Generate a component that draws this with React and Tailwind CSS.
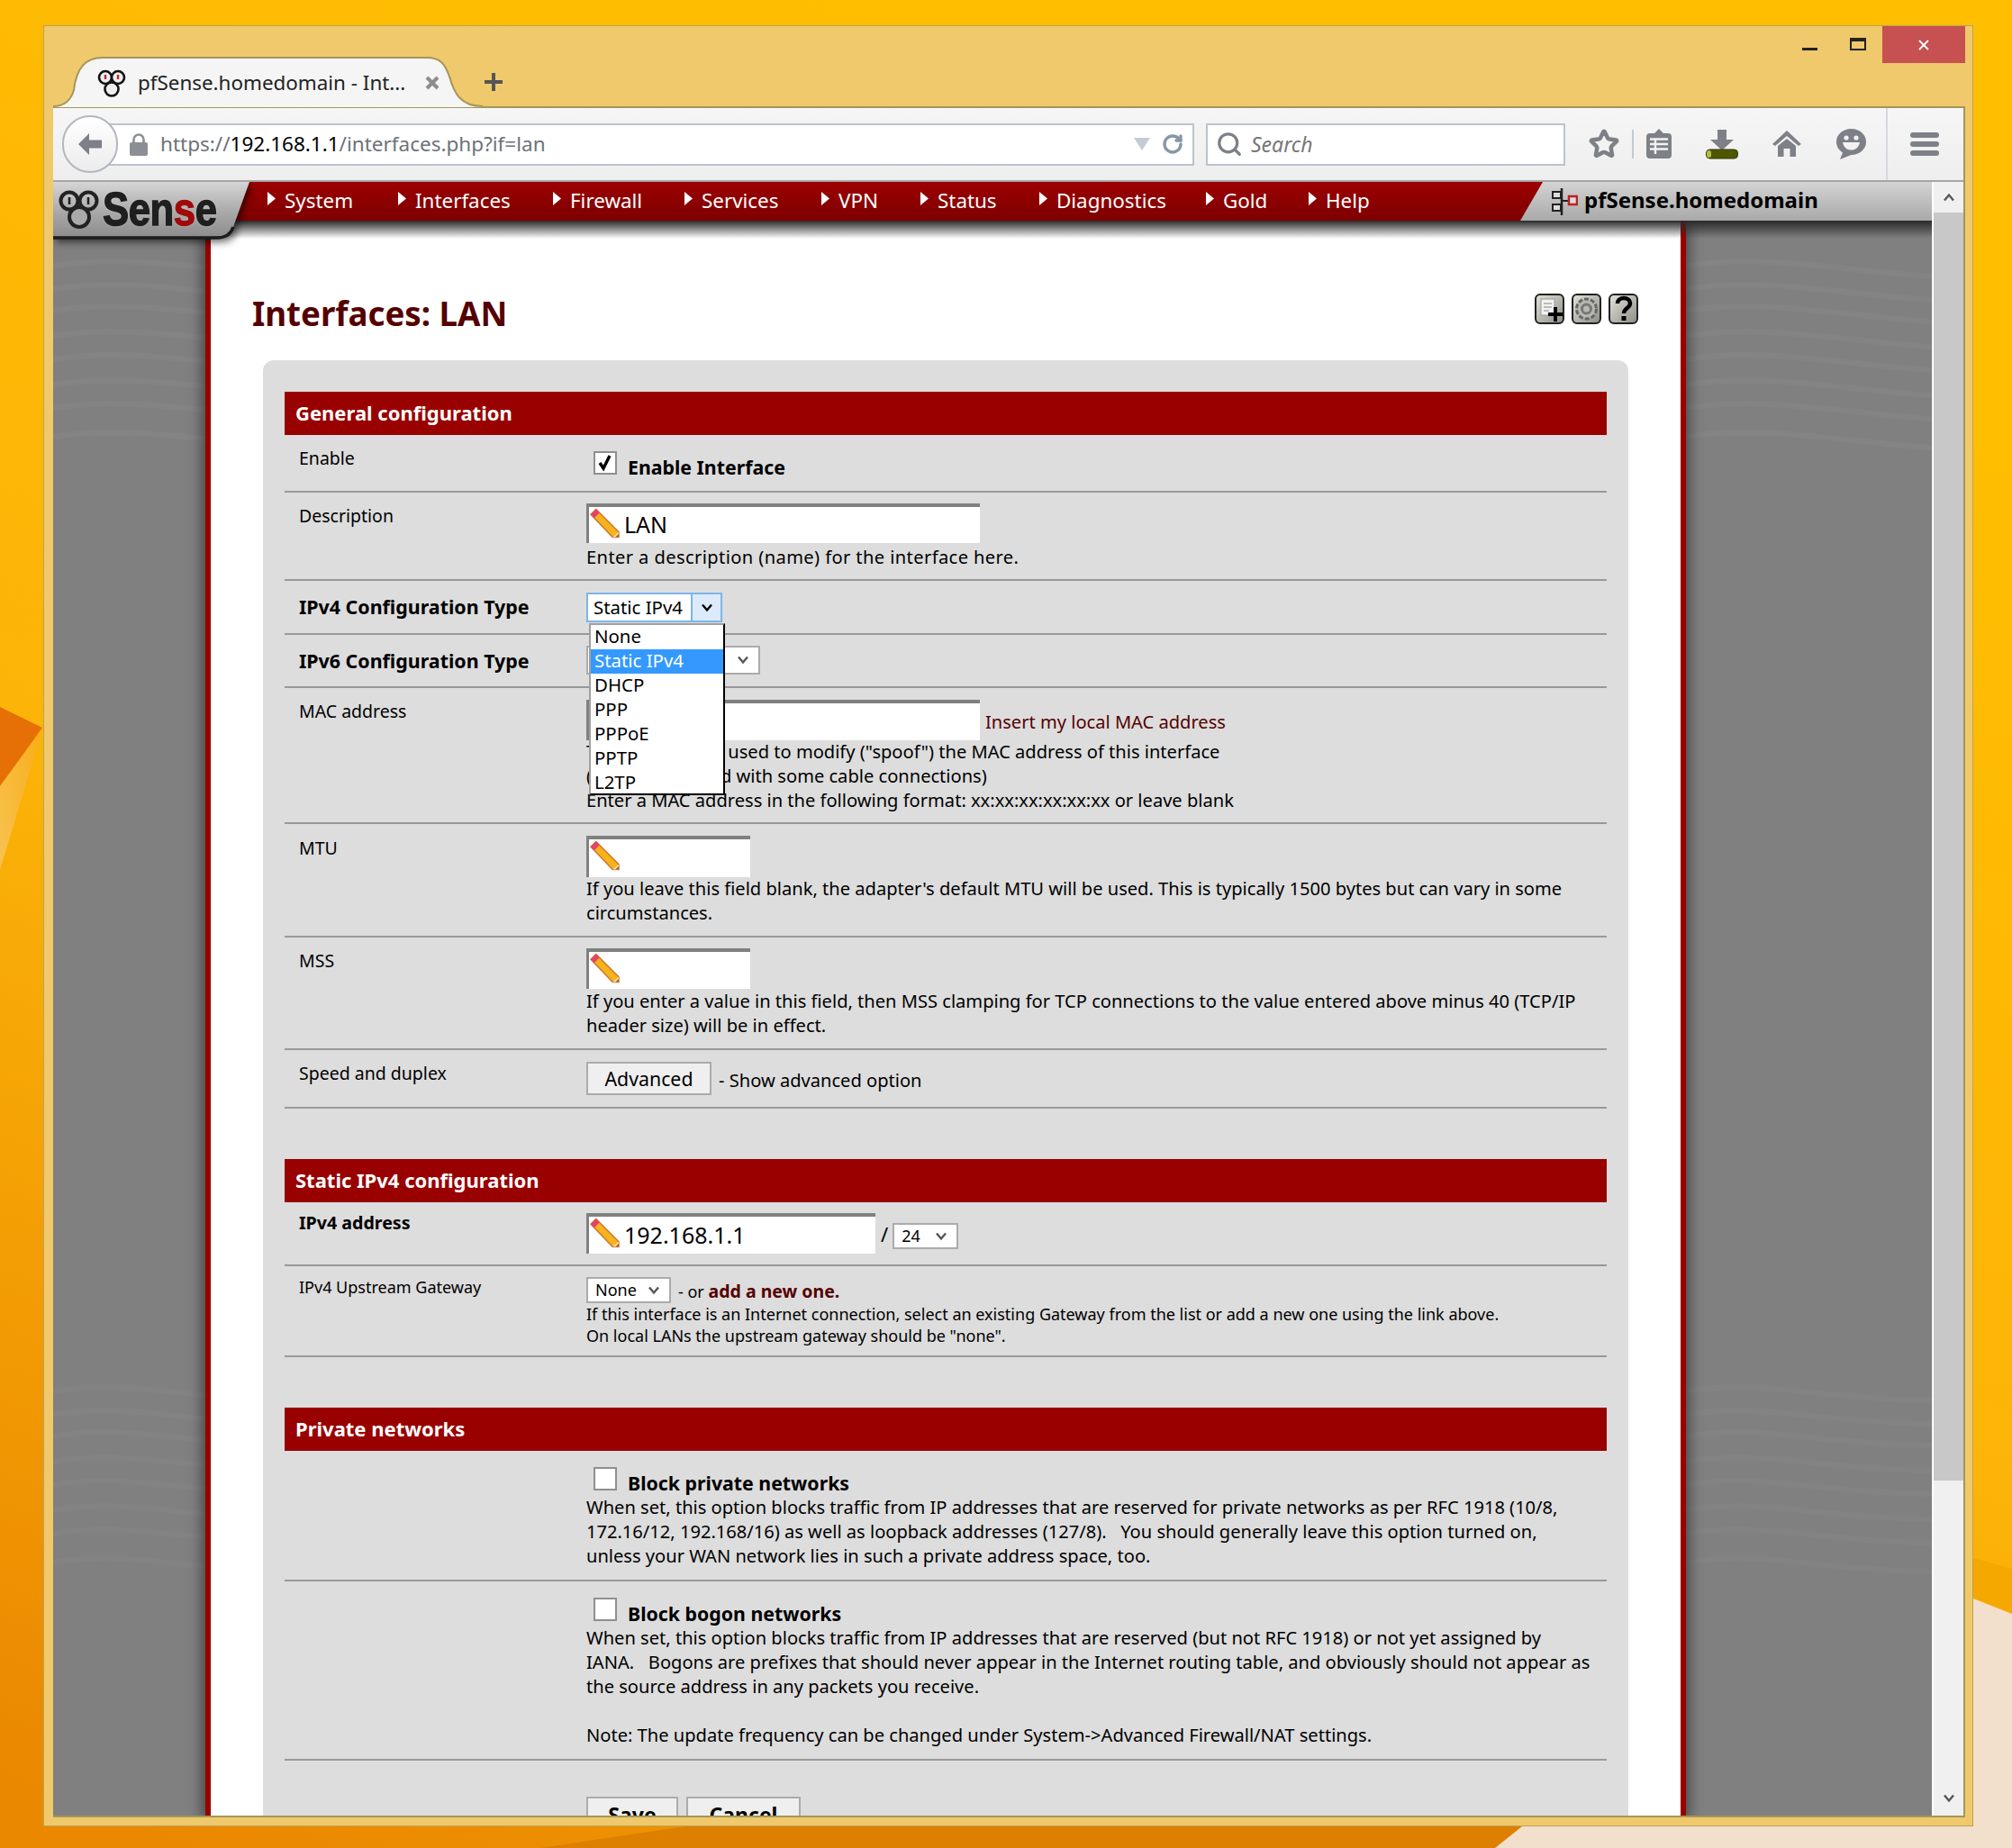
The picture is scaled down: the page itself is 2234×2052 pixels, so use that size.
import React from "react";
import { RotateCw, Search, Star } from "lucide-react";

const NAV = [
  ["System", "w-[145px]"],
  ["Interfaces", "w-[172px]"],
  ["Firewall", "w-[146px]"],
  ["Services", "w-[152px]"],
  ["VPN", "w-[110px]"],
  ["Status", "w-[132px]"],
  ["Diagnostics", "w-[185px]"],
  ["Gold", "w-[114px]"],
  ["Help", "w-[90px]"],
];

function Wallpaper() {
  return (
    <svg className="absolute inset-0" width="2234" height="2052" viewBox="0 0 2234 2052">
      <defs>
        <linearGradient id="wall" gradientUnits="userSpaceOnUse" x1="1000" y1="0" x2="200" y2="2052">
          <stop offset="0" stopColor="#ffbe00" />
          <stop offset="0.5" stopColor="#fcb408" />
          <stop offset="1" stopColor="#ea8800" />
        </linearGradient>
        <linearGradient id="beam" x1="1" y1="0" x2="0" y2="1">
          <stop offset="0" stopColor="#f4a72a" />
          <stop offset="1" stopColor="#f6d79b" />
        </linearGradient>
      </defs>
      <rect width="2234" height="2052" fill="url(#wall)" />
      <polygon points="47,808 0,785 0,873" fill="#e66f06" />
      <polygon points="47,810 0,873 0,966" fill="url(#beam)" opacity="0.5" />
      <polygon points="2234,1742 2191,1730 1680,1960 1500,2052 2234,2052" fill="#f5a800" />
      <polygon points="600,2052 760,2028 1900,2028 1660,2052" fill="#dd8000" />
      <polygon points="2234,1792 2191,1775 1700,2020 1660,2052 2234,2052" fill="#f2e0cc" />
    </svg>
  );
}

function Waves() {
  const rows = [0, 26, 50, 78, 104, 132, 158, 190];
  return (
    <svg className="absolute inset-0" width="100%" height="100%" preserveAspectRatio="none">
      {rows.map((y) => (
        <path key={y} d={`M0 ${50 + y} C 120 ${30 + y}, 260 ${80 + y}, 420 ${60 + y}`} stroke="#ffffff" strokeOpacity="0.03" strokeWidth="6" fill="none" />
      ))}
      {rows.map((y) => (
        <path key={y} d={`M0 ${1300 + y} C 100 ${1280 + y}, 200 ${1330 + y}, 420 ${1300 + y}`} stroke="#ffffff" strokeOpacity="0.025" strokeWidth="6" fill="none" />
      ))}
    </svg>
  );
}

function Trio({ size = 32, dark = "#111" }) {
  return (
    <svg width={size} height={size} viewBox="0 0 32 32">
      <circle cx="9" cy="10" r="7" fill="#eee" stroke={dark} strokeWidth="2.6" />
      <circle cx="23" cy="10" r="7" fill="#eee" stroke={dark} strokeWidth="2.6" />
      <circle cx="16" cy="23" r="7.5" fill="#eee" stroke={dark} strokeWidth="2.6" />
      <path d="M9 7v5M23 7v5" stroke="#c22" strokeWidth="2.4" />
    </svg>
  );
}

function Pencil({ className = "" }) {
  return (
    <svg className={className} width="34" height="34" viewBox="0 0 34 34">
      <path d="M1 7 L7 1 L33 27 L33 33 L26 33 Z" fill="#f7b21c" stroke="#c8762b" strokeWidth="1.5" />
      <path d="M1 7 L7 1 L11 5 L5 11 Z" fill="#e8406a" />
      <path d="M26 33 L33 33 L33 27 Z" fill="#f6dfc0" />
      <path d="M29 33 L33 33 L33 29 Z" fill="#a8601e" />
    </svg>
  );
}

function Input({ w, h, value }) {
  return (
    <div className={`relative flex items-center bg-white border-t-[4px] border-l-[3px] border-[#808080] ${w} ${h}`}>
      <Pencil className="absolute left-[1px] top-[1px] w-[33px] h-[34px]" />
      <span className="ml-[39px] -mt-[2px] text-[25px] leading-[30px] text-black">{value}</span>
    </div>
  );
}

function Chevron({ className = "text-[#555]" }) {
  return (
    <svg className={className} width="12" height="10" viewBox="0 0 12 10">
      <path d="M1 1.5 L6 7.5 L11 1.5" stroke="currentColor" strokeWidth="2.4" fill="none" />
    </svg>
  );
}

function Select({ box, text, children }) {
  return (
    <div className={`flex items-center justify-between bg-white border-2 border-[#ababab] ${box} ${text}`}>
      <span className="ml-[8px] text-black">{children}</span>
      <Chevron className="mr-[11px] text-[#555]" />
    </div>
  );
}

function Checkbox({ checked }) {
  return (
    <div className="ml-[8px] flex w-[26px] h-[26px] shrink-0 items-center justify-center bg-white border-2 border-[#8f8f8f]">
      {checked && (
        <svg width="20" height="20" viewBox="0 0 20 20">
          <path d="M4 10 L8 16 L15 2" stroke="#000" strokeWidth="3.4" fill="none" />
        </svg>
      )}
    </div>
  );
}

function Row({ h, label, labelClass = "pt-[12px]", bold, small, valueClass, children }) {
  const type = small
    ? bold
      ? "text-[19.6px] leading-[24px] font-bold"
      : "text-[18px] leading-[24px]"
    : bold
      ? "text-[21.4px] leading-[27px] font-bold"
      : "text-[19.5px] leading-[27px]";
  return (
    <div className={`flex border-b-2 border-[#999] ${h}`}>
      <div className={`w-[335px] pl-[16px] shrink-0 text-black ${type} ${labelClass}`}>{label}</div>
      <div className={`relative flex-1 text-[20.1px] leading-[27px] text-black ${valueClass}`}>{children}</div>
    </div>
  );
}

function Header({ children }) {
  return (
    <div className="flex items-center h-[48px] pl-[12px] pb-[1px] bg-[#990000] text-white font-bold text-[22px]">{children}</div>
  );
}

function Check({ checked, children }) {
  return (
    <div className="flex">
      <Checkbox checked={checked} />
      <span className="ml-[12px] mt-[4px] font-bold text-[21.3px]">{children}</span>
    </div>
  );
}

function Toolbar() {
  return (
    <div className="flex items-center h-[84px] shrink-0 border-t-2 border-b-2 border-t-[#a3965a] border-b-[#a6a6a6] bg-gradient-to-b from-[#f6f6f6] to-[#eeeeee]">
      <div className="relative z-10 ml-[10px] -mr-[12px] flex items-center justify-center w-[62px] h-[64px] shrink-0 rounded-full bg-gradient-to-b from-white to-[#ececec] border-2 border-[#b3b7bd]">
        <svg width="32" height="32" viewBox="0 0 32 32">
          <path d="M15 4 L3 16 L15 28 L15 20.5 L29 20.5 L29 11.5 L15 11.5 Z" fill="#7b8089" />
        </svg>
      </div>
      <div className="flex items-center w-[1207px] h-[47px] shrink-0 pl-[22px] pr-[10px] bg-white border-2 border-[#bcc3cf] text-[22.5px] text-[#6d7279]">
        <svg width="22" height="25" viewBox="0 0 22 25" className="shrink-0">
          <path d="M5.5 11V7a5.5 5.5 0 0 1 11 0v4" stroke="#8b8f95" strokeWidth="2.6" fill="none" />
          <rect x="1" y="10" width="20" height="15" rx="2" fill="#8b8f95" />
        </svg>
        <span className="ml-[13px]">
          https://<span className="text-black">192.168.1.1</span>/interfaces.php?if=lan
        </span>
        <svg className="ml-auto" width="20" height="16" viewBox="0 0 20 16">
          <path d="M1 1 H19 L10 15 Z" fill="#c3cbd6" />
        </svg>
        <RotateCw className="ml-[12px] text-[#8797a8]" size={24} strokeWidth={3.4} />
      </div>
      <div className="ml-[13px] flex items-center w-[399px] h-[47px] shrink-0 pl-[9px] bg-white border-2 border-[#bcc3cf]">
        <Search size={30} strokeWidth={2.6} className="text-[#7d8087]" />
        <span className="ml-[9px] italic text-[23px] text-[#777]">Search</span>
      </div>
      <div className="ml-[18px] flex justify-center w-[50px] shrink-0">
        <Star size={34} strokeWidth={3.2} className="text-[#7d8087]" />
      </div>
      <div className="ml-[6px] w-[2px] h-[32px] bg-[#c3cad4]" />
      <div className="ml-[3px] flex justify-center w-[50px] shrink-0">
        <svg width="30" height="34" viewBox="0 0 30 34">
          <path d="M15 0 L20 5 H25 Q29 5 29 9 V29 Q29 33 25 33 H5 Q1 33 1 29 V9 Q1 5 5 5 H10 Z" fill="#7d8087" />
          <path d="M11 11 V28 M5 11.5 H25 M5 17 H25 M5 22.5 H25" stroke="#f2f2f2" strokeWidth="2.4" />
        </svg>
      </div>
      <div className="ml-[15px] flex justify-center w-[60px] shrink-0">
        <svg width="36" height="33" viewBox="0 0 36 33">
          <path d="M13 0 H23 V11 H31 L18 23 L5 11 H13 Z" fill="#7d8087" />
          <rect x="0.5" y="22" width="35" height="10" rx="4" fill="#4f5600" stroke="#333a00" />
          <rect x="1" y="23" width="5" height="8" rx="2.5" fill="#aebf3f" />
        </svg>
      </div>
      <div className="ml-[12px] flex justify-center w-[60px] shrink-0">
        <svg width="32" height="30" viewBox="0 0 32 30">
          <path d="M16 0 L32 15 L29 17 L16 6 L3 17 L0 15 Z" fill="#7d8087" />
          <path d="M16 9 L26 17 V29 H19.5 V20 H12.5 V29 H6 V17 Z" fill="#7d8087" />
        </svg>
      </div>
      <div className="ml-[11px] flex justify-center w-[60px] shrink-0">
        <svg width="33" height="34" viewBox="0 0 33 34">
          <path d="M16.5 0 C26 0 33 6.5 33 14.5 C33 22.5 26 29 16.5 29 L4 34 L7 26.5 C2.5 23.5 0 19.5 0 14.5 C0 6.5 7 0 16.5 0 Z" fill="#7d8087" />
          <circle cx="11" cy="10" r="2.6" fill="#f2f2f2" />
          <circle cx="22" cy="10" r="2.6" fill="#f2f2f2" />
          <path d="M7 15 H26 C25 21 21 23.5 16.5 23.5 C12 23.5 8 21 7 15 Z" fill="#f2f2f2" />
        </svg>
      </div>
      <div className="ml-[9px] w-[2px] h-full bg-[#d6d9dd]" />
      <div className="ml-[11px] flex flex-col items-center justify-center gap-[4px] w-[60px] shrink-0">
        <div className="w-[32px] h-[6px] rounded-[3px] bg-[#7d8087]" />
        <div className="w-[32px] h-[6px] rounded-[3px] bg-[#7d8087]" />
        <div className="w-[32px] h-[6px] rounded-[3px] bg-[#7d8087]" />
      </div>
    </div>
  );
}

function NavBar() {
  return (
    <div className="relative z-20 flex h-[43px] shrink-0 bg-gradient-to-b from-[#9c0000] to-[#7e0000]">
      <div className="flex items-center pl-[238px]">
        {NAV.map(([t, w]) => (
          <div key={t} className={`flex items-center shrink-0 ${w}`}>
            <svg width="9" height="15" viewBox="0 0 9 15" className="shrink-0 -mt-[6px]">
              <path d="M0 0 L9 7.5 L0 15 Z" fill="#ffffff" />
            </svg>
            <span className="ml-[10px] -mt-[2px] text-white text-[22.4px] leading-[26px]">{t}</span>
          </div>
        ))}
      </div>
      <div className="ml-auto flex items-center w-[457px] pl-[34px] bg-gradient-to-b from-[#d4d4d4] to-[#a9a9a9] [clip-path:polygon(25px_0,100%_0,100%_100%,0_100%)]">
        <svg width="30" height="32" viewBox="0 0 30 32" className="shrink-0">
          <path d="M12 1 V31" stroke="#222" strokeWidth="2.5" />
          <rect x="2" y="5" width="9" height="7" fill="#ddd" stroke="#222" strokeWidth="2" />
          <rect x="2" y="19" width="9" height="7" fill="#ddd" stroke="#222" strokeWidth="2" />
          <path d="M12 15 H20" stroke="#222" strokeWidth="2" />
          <rect x="20" y="10" width="9" height="9" fill="#ddd" stroke="#b22" strokeWidth="2.5" />
        </svg>
        <span className="ml-[7px] -mt-[3px] font-bold text-[24px] text-black">pfSense.homedomain</span>
      </div>
      <div className="absolute left-0 top-0 w-[220px] h-[66px] [filter:drop-shadow(3px_3px_4px_rgba(0,0,0,0.6))]">
        <svg className="absolute inset-0" width="220" height="66" viewBox="0 0 220 66">
          <defs>
            <linearGradient id="logo" x1="0" y1="0" x2="0" y2="1">
              <stop offset="0" stopColor="#d5d5d5" />
              <stop offset="0.55" stopColor="#a8a8a8" />
              <stop offset="1" stopColor="#8c8c8c" />
            </linearGradient>
          </defs>
          <path d="M0 0 H218 L200 50 Q196 62 182 62 H0 Z" fill="url(#logo)" />
          <path d="M0 62 H182 Q196 62 200 50" stroke="#1c1c1c" strokeWidth="3.5" fill="none" />
        </svg>
        <div className="relative flex items-center h-[60px] pl-[6px]">
          <svg width="46" height="46" viewBox="0 0 46 46" className="shrink-0">
            <circle cx="12" cy="14" r="9.5" fill="none" stroke="#222" strokeWidth="4" />
            <circle cx="33" cy="14" r="9.5" fill="none" stroke="#222" strokeWidth="4" />
            <circle cx="23" cy="32" r="11" fill="#aaa" stroke="#222" strokeWidth="4" />
            <path d="M12 10v8M33 10v8" stroke="#222" strokeWidth="2.6" />
          </svg>
          <span className="ml-[3px] origin-left scale-x-[0.84] font-['Liberation_Sans',sans-serif] font-bold text-[52px] leading-none tracking-[-0.5px] text-[#1f1f1f] [-webkit-text-stroke:1.4px_#1f1f1f] [text-shadow:0_0_4px_rgba(255,255,255,0.35)]">
            Sen<span className="text-[#a00a0a] [-webkit-text-stroke:1.4px_#a00a0a]">s</span>e
          </span>
        </div>
      </div>
    </div>
  );
}

function Form() {
  return (
    <div className="mt-[26px] mx-[58px] pt-[35px] px-[24px] bg-[#dddddd] rounded-t-[12px]">
      <Header>General configuration</Header>
      <Row h="h-[64px]" label="Enable" valueClass="pt-[18px]">
        <Check checked>Enable Interface</Check>
      </Row>
      <Row h="h-[98px]" label="Description" valueClass="pt-[12px]">
        <Input w="w-[437px]" h="h-[44px]" value="LAN" />
        <div className="mt-[2px] tracking-[0.4px]">Enter a description (name) for the interface here.</div>
      </Row>
      <Row h="h-[60px]" bold label="IPv4 Configuration Type" labelClass="pt-[15px]" valueClass="pt-[13px]">
        <div className="flex items-center w-[151px] h-[33px] bg-white border-2 border-[#7eb4ea]">
          <span className="ml-[6px] text-[20.4px] flex-1">Static IPv4</span>
          <div className="flex items-center justify-center w-[33px] h-full bg-[#dcebfb] border-l-2 border-[#7eb4ea]">
            <Chevron className="text-black" />
          </div>
        </div>
        <div className="absolute z-20 left-[3px] top-[47px] w-[151px] h-[191px] bg-white border-2 border-t-[#a0a0a0] border-l-[#a0a0a0] border-r-black border-b-black flex flex-col text-[20.4px]">
          {["None", "Static IPv4", "DHCP", "PPP", "PPPoE", "PPTP", "L2TP"].map((o) => (
            <div key={o} className={`flex items-center h-[27px] pb-[2px] pl-[4px] ${o === "Static IPv4" ? "bg-[#3399ff] text-white" : "text-black"}`}>{o}</div>
          ))}
        </div>
      </Row>
      <Row h="h-[59px]" bold label="IPv6 Configuration Type" labelClass="pt-[15px]" valueClass="pt-[12px]">
        <Select box="w-[193px] h-[32px]" text="text-[20px]">None</Select>
      </Row>
      <Row h="h-[151px]" label="MAC address" valueClass="pt-[13px]">
        <div className="flex items-center">
          <Input w="w-[437px]" h="h-[45px]" value="" />
          <span className="ml-[6px] mt-[4px] text-[#550000]">Insert my local MAC address</span>
        </div>
        <div className="-mt-[1px]">This field can be used to modify ("spoof") the MAC address of this interface</div>
        <div>(may be required with some cable connections)</div>
        <div>Enter a MAC address in the following format: xx:xx:xx:xx:xx:xx or leave blank</div>
      </Row>
      <Row h="h-[126px]" label="MTU" labelClass="pt-[13px]" valueClass="pt-[13px]">
        <Input w="w-[182px]" h="h-[46px]" value="" />
        <div className="-mt-[1px]">If you leave this field blank, the adapter's default MTU will be used. This is typically 1500 bytes but can vary in some<br />circumstances.</div>
      </Row>
      <Row h="h-[125px]" label="MSS" valueClass="pt-[12px]">
        <Input w="w-[182px]" h="h-[45px]" value="" />
        <div>If you enter a value in this field, then MSS clamping for TCP connections to the value entered above minus 40 (TCP/IP<br />header size) will be in effect.</div>
      </Row>
      <Row h="h-[65px]" label="Speed and duplex" valueClass="pt-[13px] flex items-start">
        <div className="flex items-center justify-center w-[139px] h-[37px] bg-[#efefef] border-2 border-[#ababab] text-[21.3px]">Advanced</div>
        <span className="ml-[8px] mt-[7px]">- Show advanced option</span>
      </Row>

      <div className="mt-[56px]"><Header>Static IPv4 configuration</Header></div>
      <Row h="h-[71px]" small bold label="IPv4 address" labelClass="pt-[11px]" valueClass="pt-[12px] flex items-start">
        <Input w="w-[321px]" h="h-[45px]" value="192.168.1.1" />
        <span className="ml-[6px] mt-[10px] text-[22px]">/</span>
        <div className="ml-[5px] mt-[11px]">
          <Select box="w-[73px] h-[29px]" text="text-[18px]">24</Select>
        </div>
      </Row>
      <Row h="h-[101px]" small label="IPv4 Upstream Gateway" labelClass="pt-[11px]" valueClass="pt-[11px]">
        <div className="flex items-center">
          <Select box="w-[94px] h-[29px]" text="text-[18px]">None</Select>
          <span className="ml-[8px] mt-[3px] text-[18px]">- or <b className="text-[19.5px] text-[#550000]">add a new one.</b></span>
        </div>
        <div className="-mt-[1px] text-[18px] leading-[24px]">
          If this interface is an Internet connection, select an existing Gateway from the list or add a new one using the link above.<br />
          On local LANs the upstream gateway should be "none".
        </div>
      </Row>

      <div className="mt-[56px]"><Header>Private networks</Header></div>
      <Row h="h-[145px]" label="" valueClass="pt-[18px]">
        <Check>Block private networks</Check>
        <div>
          When set, this option blocks traffic from IP addresses that are reserved for private networks as per RFC 1918 (10/8,<br />
          172.16/12, 192.168/16) as well as loopback addresses (127/8). &nbsp; You should generally leave this option turned on,<br />
          unless your WAN network lies in such a private address space, too.
        </div>
      </Row>
      <Row h="h-[199px]" label="" valueClass="pt-[18px]">
        <Check>Block bogon networks</Check>
        <div>
          When set, this option blocks traffic from IP addresses that are reserved (but not RFC 1918) or not yet assigned by<br />
          IANA. &nbsp; Bogons are prefixes that should never appear in the Internet routing table, and obviously should not appear as<br />
          the source address in any packets you receive.<br /><br />
          Note: The update frequency can be changed under System-&gt;Advanced Firewall/NAT settings.
        </div>
      </Row>
      <div className="flex pt-[40px] pl-[335px] h-[120px]">
        <div className="flex justify-center items-start pt-[1px] w-[102px] h-[50px] bg-[#efefef] border-2 border-[#ababab] font-bold text-[23px] text-black">Save</div>
        <div className="ml-[9px] flex justify-center items-start pt-[1px] w-[127px] h-[50px] bg-[#efefef] border-2 border-[#ababab] font-bold text-[23px] text-black">Cancel</div>
      </div>
    </div>
  );
}

function IconBtn({ kind }) {
  return (
    <svg width="33" height="34" viewBox="0 0 33 34">
      <defs>
        <linearGradient id={`btn-${kind}`} x1="0" y1="0" x2="1" y2="1">
          <stop offset="0" stopColor="#e4e4dc" />
          <stop offset="1" stopColor="#8d8d85" />
        </linearGradient>
      </defs>
      <rect x="1" y="1" width="31" height="32" rx="5" fill={`url(#btn-${kind})`} stroke="#222" strokeWidth="2" />
      {kind === "add" && (
        <>
          <rect x="7" y="6" width="15" height="18" fill="#f2f2f2" stroke="#999" />
          <path d="M10 11h9M10 15h9M10 19h6" stroke="#aaa" strokeWidth="1.5" />
          <path d="M23 15 V31 M15 23 H31" stroke="#000" strokeWidth="4" />
        </>
      )}
      {kind === "gear" && (
        <>
          <circle cx="16.5" cy="17" r="11" fill="#b8b8b2" stroke="#666" strokeWidth="3" strokeDasharray="5 2" />
          <circle cx="16.5" cy="17" r="5" fill="none" stroke="#777" strokeWidth="3" />
        </>
      )}
      {kind === "help" && (
        <>
          <path d="M10 11 C10 3 24 3 24 11 C24 16 17 16 17 22" stroke="#000" strokeWidth="4.4" fill="none" />
          <rect x="14.5" y="25" width="5" height="5" fill="#000" />
        </>
      )}
    </svg>
  );
}

export default function App() {
  return (
    <div className="relative w-[2234px] h-[2052px] overflow-hidden font-['Noto_Sans',sans-serif]">
      <Wallpaper />
      <div className="relative flex flex-col w-[2143px] h-[2000px] ml-[48px] translate-y-[28px] pl-[10px] pr-[8px] pb-[9px] bg-[#efc96b] border border-[#b9a35a]">
        <div className="relative z-10 flex items-start h-[89px] shrink-0">
          <div className="relative mt-[34px] w-[477px] h-[57px] shrink-0">
            <svg className="absolute inset-0" width="477" height="57" viewBox="0 0 477 57">
              <path d="M0 55 C12 55 20 48 23 37 C26 12 36 1 55 1 H415 C430 1 435 8 440 22 C445 40 452 55 477 55 V57 H0 Z" fill="#f5f5f5" stroke="#a3965a" strokeWidth="2" />
            </svg>
            <div className="relative flex items-center h-[55px] pt-[3px] pl-[49px] text-[22.4px] text-[#222]">
              <Trio size={32} />
              <span className="ml-[13px] whitespace-nowrap">pfSense.homedomain - Int...</span>
              <svg className="ml-[21px]" width="18" height="18" viewBox="0 0 18 18">
                <path d="M3 3 L15 15 M15 3 L3 15" stroke="#8c8c8c" strokeWidth="4" />
              </svg>
            </div>
          </div>
          <svg className="ml-[1px] mt-[51px]" width="22" height="22" viewBox="0 0 22 22">
            <path d="M11 1 V21 M1 11 H21" stroke="#555" strokeWidth="4" />
          </svg>
          <div className="ml-auto flex items-start">
            <div className="mt-[24px] mr-[36px] w-[17px] h-[3px] bg-[#222]" />
            <div className="mt-[13px] mr-[18px] w-[18px] h-[14px] border-2 border-t-4 border-[#222]" />
            <div className="flex items-center justify-center w-[92px] h-[41px] bg-[#c75050]">
              <svg width="14" height="14" viewBox="0 0 14 14">
                <path d="M2 2 L12 12 M12 2 L2 12" stroke="#fff" strokeWidth="1.8" />
              </svg>
            </div>
          </div>
        </div>
        <div className="flex flex-col flex-1 min-h-0 border-r-2 border-b-2 border-[#a3965a]">
          <Toolbar />
          <div className="flex flex-1 min-h-0">
            <div className="relative flex flex-col flex-1 min-w-0 overflow-hidden bg-[#808080]">
              <NavBar />
              <div className="flex flex-1 min-h-0">
                <div className="relative w-[169px] shrink-0 overflow-hidden"><Waves /></div>
                <div className="relative z-10 w-[1644px] shrink-0 bg-white border-x-[6px] border-[#990000] shadow-[0_0_14px_4px_rgba(0,0,0,0.45)]">
                  <div className="flex items-center justify-between h-[50px] mt-[79px] pl-[46px] pr-[47px]">
                    <span className="font-bold text-[36.7px] text-[#550000]">Interfaces: LAN</span>
                    <div className="flex gap-[8px] self-start mt-[2px]">
                      <IconBtn kind="add" />
                      <IconBtn kind="gear" />
                      <IconBtn kind="help" />
                    </div>
                  </div>
                  <Form />
                </div>
                <div className="relative flex-1 overflow-hidden"><Waves /></div>
              </div>
              <div className="absolute z-10 left-0 right-0 top-[43px] h-[20px] bg-gradient-to-b from-[#2a2a2a] to-transparent" />
            </div>
            <div className="flex flex-col w-[35px] shrink-0 bg-[#f0f0f0] border-l-2 border-white">
              <div className="flex items-center justify-center h-[34px] shrink-0">
                <Chevron className="rotate-180 text-[#555]" />
              </div>
              <div className="h-[1408px] bg-[#c8c8c8]" />
              <div className="flex flex-1 items-end justify-center pb-[14px]">
                <Chevron className="text-[#555]" />
              </div>
            </div>
          </div>
        </div>
      </div>
    </div>
  );
}
